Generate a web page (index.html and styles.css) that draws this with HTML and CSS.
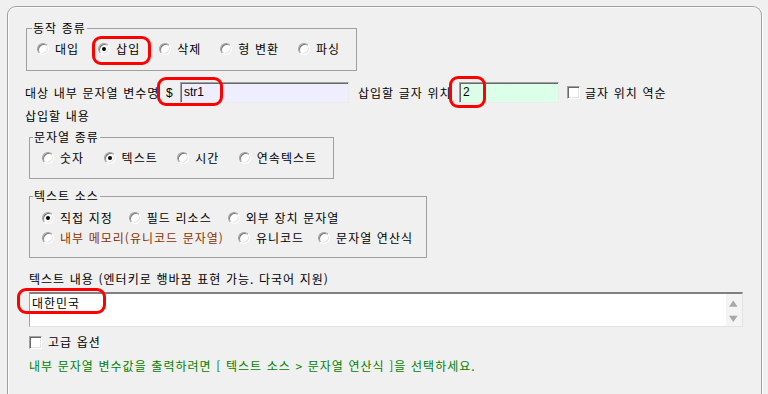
FILE: index.html
```html
<!DOCTYPE html>
<html lang="ko">
<head>
<meta charset="utf-8">
<title>문자열 삽입</title>
<link rel="stylesheet" href="styles.css">
</head>
<body>
<div class="panel">
  <fieldset class="group g-action">
    <legend>동작 종류</legend>
    <div class="radios gap-19">
      <span class="radio"><span class="rb"></span>대입</span>
      <span class="radio"><span class="rb on"></span>삽입</span>
      <span class="radio"><span class="rb"></span>삭제</span>
      <span class="radio"><span class="rb"></span>형 변환</span>
      <span class="radio"><span class="rb"></span>파싱</span>
    </div>
  </fieldset>

  <div class="var-row">
    <span class="lbl lbl-var">대상 내부 문자열 변수명</span>
    <span class="dollar">$</span>
    <div class="field field-var">str1</div>
    <span class="lbl lbl-pos">삽입할 글자 위치</span>
    <div class="field field-pos">2</div>
    <span class="cb cb-rev"></span>
    <span class="lbl">글자 위치 역순</span>
  </div>

  <div class="section-title">삽입할 내용</div>

  <div class="content">
    <fieldset class="group g-type">
      <legend>문자열 종류</legend>
      <div class="radios gap-19h">
        <span class="radio"><span class="rb"></span>숫자</span>
        <span class="radio"><span class="rb on"></span>텍스트</span>
        <span class="radio"><span class="rb"></span>시간</span>
        <span class="radio"><span class="rb"></span>연속텍스트</span>
      </div>
    </fieldset>

    <fieldset class="group g-source">
      <legend>텍스트 소스</legend>
      <div class="radios gap-16">
        <span class="radio"><span class="rb on"></span>직접 지정</span>
        <span class="radio"><span class="rb"></span>필드 리소스</span>
        <span class="radio"><span class="rb"></span>외부 장치 문자열</span>
      </div>
      <div class="radios gap-14 row-2">
        <span class="radio brown"><span class="rb"></span>내부 메모리(유니코드 문자열)</span>
        <span class="radio"><span class="rb"></span>유니코드</span>
        <span class="radio"><span class="rb"></span>문자열 연산식</span>
      </div>
    </fieldset>

    <div class="text-label">텍스트 내용 (엔터키로 행바꿈 표현 가능. 다국어 지원)</div>
    <div class="textbox">
      <div class="textbox-text">대한민국</div>
      <div class="scroll">
        <svg width="16" height="33" viewBox="0 0 16 33">
          <polygon points="3,12.7 11.6,12.7 7.3,6.5" fill="#a8a8a8"/>
          <polygon points="3,21.7 11.6,21.7 7.3,28" fill="#a8a8a8"/>
        </svg>
      </div>
    </div>

    <div class="check-row"><span class="cb"></span><span class="lbl">고급 옵션</span></div>

    <div class="hint">내부 문자열 변수값을 출력하려면 [ 텍스트 소스 &gt; 문자열 연산식 ]을 선택하세요.</div>
  </div>
</div>

<div class="mark mark-insert"></div>
<div class="mark mark-var"></div>
<div class="mark mark-pos"></div>
<div class="mark mark-text"></div>
</body>
</html>
```

FILE: styles.css
```css
html, body {
  margin: 0;
  height: 394px;
  overflow: hidden;
}

body {
  background: #f0f0f0;
  color: #000;
  font-family: "Noto Sans CJK KR", "Noto Sans", sans-serif;
  font-size: 12px;
  line-height: 14px;
  letter-spacing: 1px;
  word-spacing: 0.3px;
  position: relative;
}

.panel {
  margin: 6px 0 0 7px;
  width: 755px;
  height: 400px;
  box-sizing: border-box;
  border: 1px solid #a0a0a0;
  border-bottom: none;
  border-radius: 9px 9px 0 0;
  box-shadow: inset 1px 1px 0 #fbfbfb, 1px 0 0 #ffffff;
  padding: 14px 0 0 17px;
}

/* group boxes */
.group {
  margin: 0;
  padding: 0;
  border: 1px solid #a0a0a0;
  box-sizing: border-box;
  min-width: 0;
}

.group legend {
  padding: 0 1px;
  height: 14px;
  line-height: 14px;
}

.g-action {
  margin-left: 1px;
  width: 331px;
  padding: 7px 0 14px 0;
}
.g-action legend { margin-left: 5px; }
.g-action .radios { padding-left: 10px; }

.g-type {
  margin-top: 7px;
  width: 305px;
  padding: 7px 0 13px 0;
}
.g-type legend { margin-left: 3px; }
.g-type .radios { padding-left: 12px; }

.g-source {
  margin-top: 10px;
  width: 398px;
  padding: 8px 0 12px 0;
}
.g-source legend { margin-left: 3px; }
.g-source .radios { padding-left: 12px; }
.g-source .row-2 { margin-top: 6px; }

/* radios */
.radios {
  display: flex;
  align-items: center;
  height: 14px;
}
.gap-19 { gap: 19px; }
.gap-19h { gap: 19.5px; }
.gap-16 { gap: 16px; }
.gap-14 { gap: 14px; }

.radio {
  display: flex;
  align-items: center;
  height: 14px;
  white-space: nowrap;
}
.radio.brown { color: #8a3000; }

.rb {
  position: relative;
  width: 12px;
  height: 12px;
  box-sizing: border-box;
  margin-right: 6px;
  border-radius: 50%;
  border: 1px solid;
  border-color: #a0a0a0 #ffffff #ffffff #a0a0a0;
  background: #ffffff;
  box-shadow: inset 1px 1px 0 #7a7a7a, inset -1px -1px 0 #e3e3e3;
  flex: none;
}
.rb.on::after {
  content: "";
  position: absolute;
  left: 3px;
  top: 3px;
  width: 4px;
  height: 4px;
  border-radius: 50%;
  background: #000;
}

/* checkbox */
.cb {
  width: 13px;
  height: 13px;
  box-sizing: border-box;
  border: 1px solid;
  border-color: #a0a0a0 #ffffff #ffffff #a0a0a0;
  background: #ffffff;
  box-shadow: inset 1px 1px 0 #696969, inset -1px -1px 0 #e3e3e3;
  flex: none;
}

/* variable row */
.var-row {
  display: flex;
  align-items: center;
  height: 21px;
  margin-top: 11px;
  white-space: nowrap;
}
.lbl-var { width: 141px; }
.dollar {
  width: 14px;
  font-family: "Liberation Sans", Arial, sans-serif;
  letter-spacing: 0;
}
.field {
  height: 21px;
  box-sizing: border-box;
  border: 1px solid;
  border-color: #a0a0a0 #ececec #ececec #a0a0a0;
  box-shadow: inset 1px 1px 0 #696969;
  padding-left: 3px;
  font-family: "Liberation Sans", Arial, sans-serif;
  font-size: 12px;
  line-height: 18px;
  letter-spacing: 0;
}
.field-var {
  width: 169px;
  background: #eeeeff;
}
.lbl-pos {
  margin-left: 9px;
  width: 101px;
}
.field-pos {
  width: 100px;
  background: #dcffe9;
}
.cb-rev {
  margin-left: 8px;
  margin-right: 5px;
}

.section-title {
  margin-top: 6px;
  height: 14px;
}

.content {
  padding-left: 4px;
}

.text-label {
  margin-top: 14px;
  height: 14px;
  white-space: nowrap;
}

.textbox {
  display: flex;
  margin-top: 6px;
  width: 714px;
  height: 35px;
  box-sizing: border-box;
  border: 1px solid;
  border-color: #a0a0a0 #e3e3e3 #e3e3e3 #a0a0a0;
  border-top: 2px solid #808080;
  background: #ffffff;
}
.textbox-text {
  flex: 1;
  padding: 2px 0 0 2px;
}
.scroll {
  width: 16px;
  background: #f4f4f4;
}
.scroll svg { display: block; }

.check-row {
  display: flex;
  align-items: center;
  gap: 6px;
  margin-top: 8px;
  height: 14px;
}

.hint {
  margin-top: 10px;
  height: 14px;
  color: #008000;
  white-space: nowrap;
}

/* red annotation marks laid over the form */
.mark {
  position: absolute;
  box-sizing: border-box;
  border: 3px solid #ff0000;
  border-radius: 9px;
}
.mark-insert { left: 92px; top: 36px; width: 59px; height: 29px; }
.mark-var    { left: 157px; top: 77px; width: 66px; height: 29px; }
.mark-pos    { left: 449px; top: 76px; width: 37px; height: 32px; }
.mark-text   { left: 17px; top: 288px; width: 89px; height: 26px; }
```
